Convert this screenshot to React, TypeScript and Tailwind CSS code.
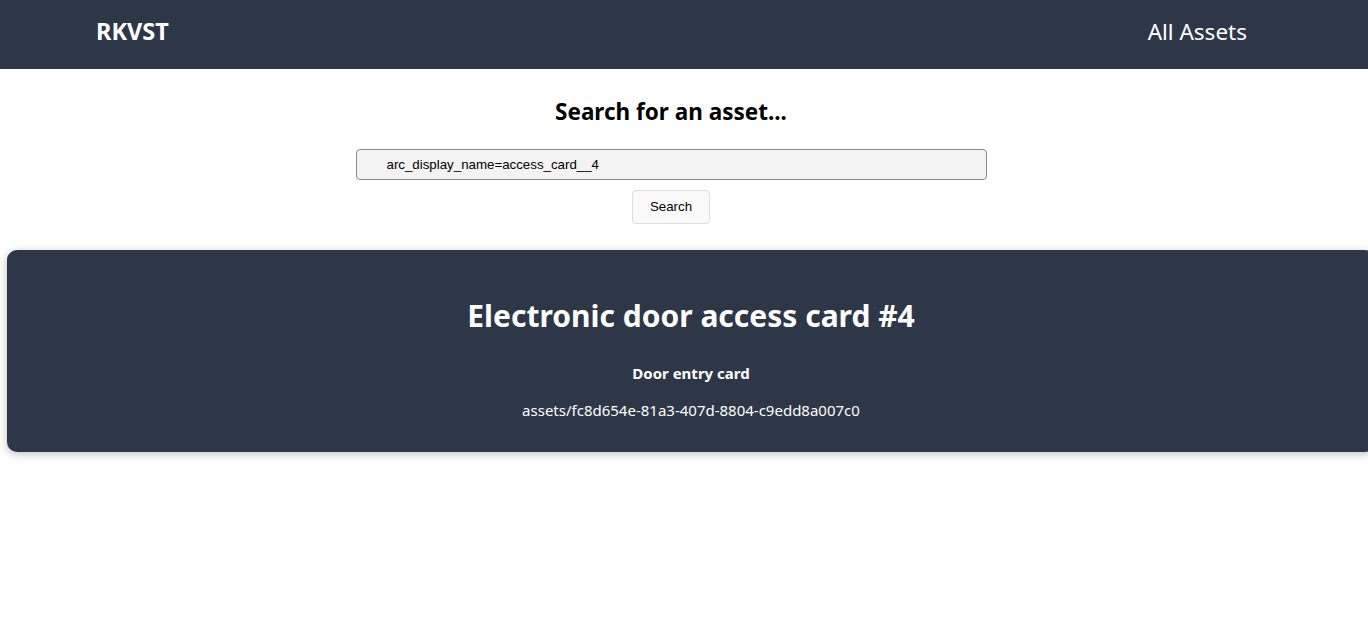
export default function App() {
	return (
		<div className="min-h-[635px] w-full overflow-hidden bg-white font-['Noto_Sans',sans-serif]">
			{/* Header */}
			<header className="flex h-[69px] items-center justify-between bg-[#2e3748] pb-[6px] pl-[96px] pr-[121px] text-white">
				<div className="text-[23.5px] font-bold">RKVST</div>
				<div className="text-[22.5px]">All Assets</div>
			</header>

			{/* Search */}
			<div className="flex flex-col items-center pt-[36px] pr-[26px]">
				<h2 className="-mt-[4px] text-[22.5px] leading-none font-bold text-black">Search for an asset...</h2>
				<input
					defaultValue="arc_display_name=access_card__4"
					className="mt-[25px] h-[31px] w-[631px] rounded-[4px] border border-[#8a8a8a] bg-[#f3f3f3] pl-[30px] font-['Liberation_Sans',sans-serif] text-[13.3px] text-black outline-none"
				/>
				<button className="mt-[10px] h-[34px] w-[78px] rounded-[4px] border border-[#dcdcdc] bg-[#fafafa] font-['Liberation_Sans',sans-serif] text-[13.3px] text-black">
					Search
				</button>
			</div>

			{/* Result card */}
			<div className="mt-[26px] ml-[7px] w-full rounded-[10px] bg-[#2e3748] pt-[47px] pb-[30px] text-center text-white shadow-[0_2px_8px_rgba(0,0,0,0.25)]">
				<h1 className="text-[30px] leading-[38px] font-bold">Electronic door access card #4</h1>
				<p className="mt-[27px] text-[15px] font-bold">Door entry card</p>
				<p className="mt-[15px] text-[15px]">assets/fc8d654e-81a3-407d-8804-c9edd8a007c0</p>
			</div>
		</div>
	);
}
